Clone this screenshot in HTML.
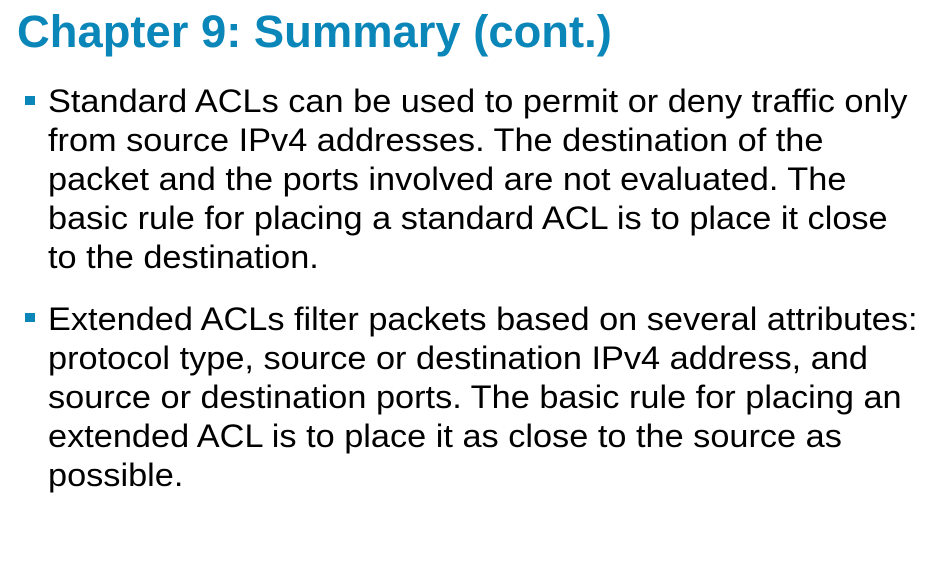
<!DOCTYPE html>
<html><head><meta charset="utf-8"><style>
body{margin:0;width:927px;height:580px;background:#fff;position:relative;overflow:hidden;font-family:"Liberation Sans",Arial,sans-serif}
.t{position:absolute;left:17px;top:9px;font-size:45px;line-height:45px;font-weight:bold;color:#0a86b8;white-space:nowrap;transform:scaleX(1.008);transform-origin:0 0}
.p{position:absolute;left:48px;font-size:32px;line-height:39px;color:#000;white-space:nowrap;transform:scaleX(1.072);transform-origin:0 0}
.b{position:absolute;left:25px;width:10px;height:9px;background:#0a86b8}
</style></head><body>
<div class="t">Chapter 9: Summary (cont.)</div>
<div class="b" style="top:96px"></div>
<div class="p" style="top:82px">
<div>Standard ACLs can be used to permit or deny traffic only</div>
<div>from source IPv4 addresses. The destination of the</div>
<div>packet and the ports involved are not evaluated. The</div>
<div>basic rule for placing a standard ACL is to place it close</div>
<div>to the destination.</div>
</div>
<div class="b" style="top:313px"></div>
<div class="p" style="top:300px">
<div>Extended ACLs filter packets based on several attributes:</div>
<div>protocol type, source or destination IPv4 address, and</div>
<div>source or destination ports. The basic rule for placing an</div>
<div>extended ACL is to place it as close to the source as</div>
<div>possible.</div>
</div>
</body></html>
